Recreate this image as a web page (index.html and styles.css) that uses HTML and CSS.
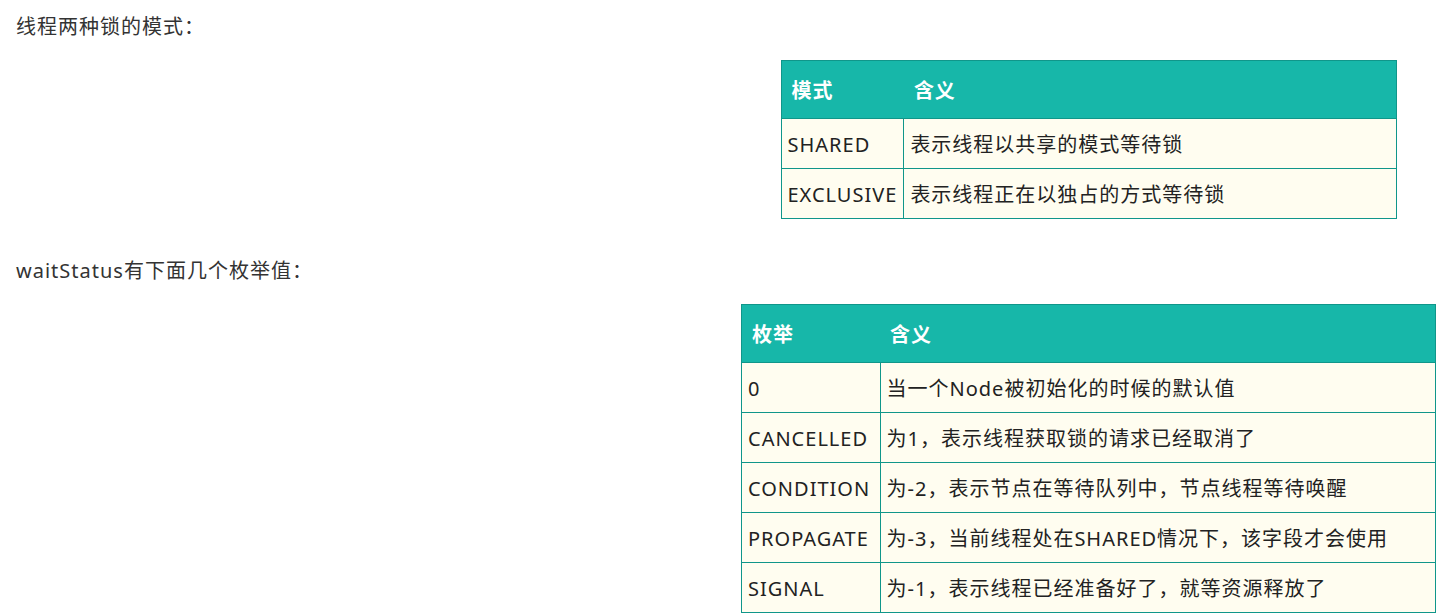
FILE: index.html
```html
<!DOCTYPE html>
<html lang="zh-CN">
<head>
<meta charset="utf-8">
<link rel="stylesheet" href="styles.css">
</head>
<body>
<p class="lead">线程两种锁的模式：</p>
<div class="table-area">
  <table class="enum-table t1">
    <thead><tr><th class="c1">模式</th><th>含义</th></tr></thead>
    <tbody>
      <tr><td>SHARED</td><td>表示线程以共享的模式等待锁</td></tr>
      <tr><td>EXCLUSIVE</td><td>表示线程正在以独占的方式等待锁</td></tr>
    </tbody>
  </table>
</div>
<p class="lead second">waitStatus有下面几个枚举值：</p>
<div class="table-area">
  <table class="enum-table t2">
    <thead><tr><th class="c1">枚举</th><th>含义</th></tr></thead>
    <tbody>
      <tr><td>0</td><td>当一个Node被初始化的时候的默认值</td></tr>
      <tr><td>CANCELLED</td><td>为1，表示线程获取锁的请求已经取消了</td></tr>
      <tr><td>CONDITION</td><td>为-2，表示节点在等待队列中，节点线程等待唤醒</td></tr>
      <tr><td>PROPAGATE</td><td>为-3，当前线程处在SHARED情况下，该字段才会使用</td></tr>
      <tr><td>SIGNAL</td><td>为-1，表示线程已经准备好了，就等资源释放了</td></tr>
    </tbody>
  </table>
</div>
</body>
</html>
```
FILE: styles.css
```css
html, body {
  margin: 0;
  padding: 0;
  background: #ffffff;
  overflow: hidden;
}
body {
  padding: 0 16px;
  font-family: "Noto Sans", "Noto Sans CJK SC", sans-serif;
  font-size: 20px;
  letter-spacing: 1px;
  color: #333333;
}
.lead {
  margin: 12px 0 0;
  line-height: 30px;
  height: 30px;
}
.lead.second {
  margin-top: 37px;
}
.table-area {
  display: flex;
  justify-content: center;
  margin-top: 18px;
  margin-left: 725px;
  width: 695px;
}
.enum-table {
  border-collapse: collapse;
  background: #fffdf0;
  color: #222222;
}
.enum-table th, .enum-table td {
  border: 1px solid #10968a;
  text-align: left;
  white-space: nowrap;
  line-height: 30px;
}
.enum-table th {
  background: #17b7a9;
  color: #ffffff;
  font-weight: bold;
  height: 54px;
  padding: 3px 10px 0;
  border-left: none;
  border-right: none;
}
.enum-table th:first-child { border-left: 1px solid #10968a; }
.enum-table th:last-child { border-right: 1px solid #10968a; }
.enum-table td {
  height: 47px;
  padding: 2px 6px 0;
}
.t1 { width: 616px; }
.t1 .c1 { width: 102px; }
.t2 { width: 696px; }
.t2 .c1 { width: 118px; }
```
